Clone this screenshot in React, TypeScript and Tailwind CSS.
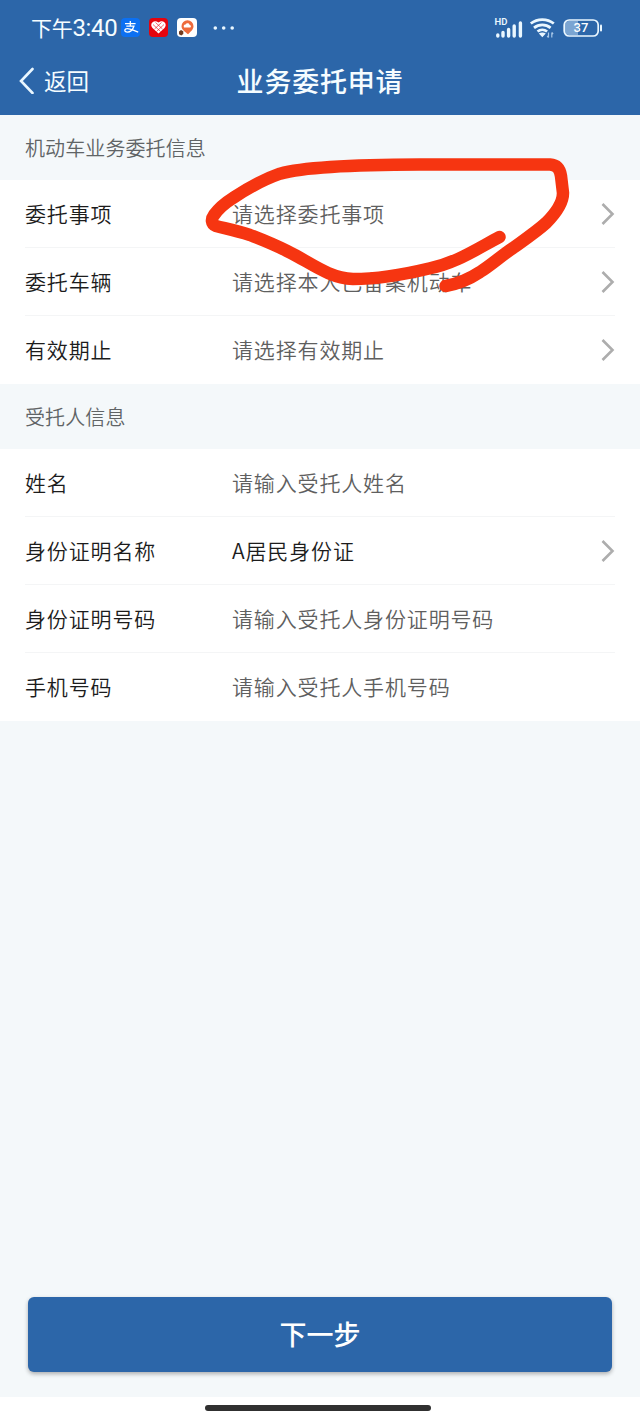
import type { ReactNode } from "react";

type Field = { label: string; value: string; filled?: boolean; arrow?: boolean };

const vehicleFields: Field[] = [
  { label: "委托事项", value: "请选择委托事项", arrow: true },
  { label: "委托车辆", value: "请选择本人已备案机动车", arrow: true },
  { label: "有效期止", value: "请选择有效期止", arrow: true },
];

const trusteeFields: Field[] = [
  { label: "姓名", value: "请输入受托人姓名" },
  { label: "身份证明名称", value: "A居民身份证", filled: true, arrow: true },
  { label: "身份证明号码", value: "请输入受托人身份证明号码" },
  { label: "手机号码", value: "请输入受托人手机号码" },
];

function StatusBar() {
  return (
    <div className="flex h-[55px] items-center pl-[31px] pr-[37px]">
      <div className="flex w-[85px] items-center leading-none whitespace-nowrap">
        <span className="text-[21px] tracking-[-0.300px]">下午</span>
        <span className="text-[24px] font-[450] tracking-[-0.300px] font-['Roboto','Noto_Sans_CJK_SC',sans-serif]">3:40</span>
      </div>
      <svg className="ml-[5px] h-[19px] w-[19px]" viewBox="0 0 19 19" fill="none">
        <rect width="19" height="19" rx="4" fill="#0c70f2" />
        <path
          d="M4 5.600h10.600M9.300 3v5.200M5.300 8.200h7.600c-1 3-3.600 5.900-6.500 5.900-3.700 0-3.200-3.500.2-3.400 3 .1 6 1.900 10.600 3.400"
          stroke="white"
          strokeWidth="1.300"
        />
      </svg>
      <svg className="ml-[9px] h-[19px] w-[19px]" viewBox="0 0 19 19" fill="none">
        <rect width="19" height="19" rx="4" fill="#e5040d" />
        <path
          d="M9.500 15.500 3.500 10C.2 6.700 4.200.8 9.500 4.600c5.300-3.800 9.300 2.100 6 5.400Z"
          fill="white"
        />
        <path
          d="m4 6.500 7.500 7M6.500 4.500l7 6.500M15 6.500l-7.500 7M12.500 4.500l-7 6.500"
          stroke="#e5040d"
          strokeWidth="0.600"
        />
      </svg>
      <svg className="ml-[9px] h-[19px] w-[20px]" viewBox="0 0 20 19" fill="none">
        <rect width="20" height="19" rx="4" fill="white" />
        <path
          d="M10.500 2.300a6 6 0 0 1 6 6c0 3.300-3.300 5.700-5.500 8-2.400-2.300-6.500-4.500-6.500-8a6 6 0 0 1 6-6Z"
          fill="#ee6b3c"
        />
        <path d="M7 9.400c-.9-2 .6-3.400 1.600-2.900.8-2 3.900-1.600 4 .4 1.400.1 1.800 1.700.8 2.500Z" fill="white" />
        <path d="m2 13.500 2-1.500 2.300 1.200v2.700L4.300 17.500 2 16.200Z" fill="#713b20" />
      </svg>
      <svg className="ml-[16px] h-[4px] w-[22px]" viewBox="0 0 22 4" fill="#eaf7ff">
        <circle cx="2.300" cy="2" r="1.800" />
        <circle cx="10.700" cy="2" r="1.800" />
        <circle cx="19.200" cy="2" r="1.800" />
      </svg>
      <div className="ml-auto flex items-center">
        <svg className="h-[24px] w-[30px]" viewBox="0 0 30 24">
          <text x="0.500" y="9" fontSize="9.500" fontWeight="600" fontFamily="Roboto, sans-serif" fill="#eaf7ff">
            HD
          </text>
          <path
            d="M3.800 20v-1M9 20v-3.500M14.600 20v-6.500M20.200 20v-10M26.400 20v-13"
            stroke="#eaf7ff"
            strokeWidth="3.400"
            strokeLinecap="round"
          />
        </svg>
        <svg className="ml-[5px] h-[22px] w-[27px]" viewBox="0 0 27 22" fill="none">
          <path
            d="M1.800 6.500c6.600-5.300 16.400-5.300 23 0M5 10.800c4.800-3.800 11.800-3.800 16.600 0M8.500 14.500c2.800-2.200 6.800-2.200 9.600 0"
            stroke="#eaf7ff"
            strokeWidth="2.800"
          />
          <path d="m9.800 16.600 3.500 3.700 3.500-3.700c-2-1.400-5-1.400-7 0Z" fill="#eaf7ff" />
          <path d="M19.500 15.500v5m-1.300-1.500 1.300 1.500M22.800 20.500v-5m1.300 1.500-1.300-1.500" stroke="#a9c8e8" strokeWidth="1.200" />
        </svg>
        <svg className="ml-[7px] h-[20px] w-[40px]" viewBox="0 0 40 20" fill="none">
          <path d="M5.500 3H15v14H5.500A4 4 0 0 1 2 13V7a4 4 0 0 1 3.500-4Z" fill="#7ba5d2" />
          <rect x="1.200" y="2" width="34" height="16" rx="5" stroke="#eaf7ff" strokeWidth="1.700" />
          <path d="M38 7.500v5" stroke="#eaf7ff" strokeWidth="2" strokeLinecap="round" />
          <text
            x="18"
            y="14.400"
            textAnchor="middle"
            fontSize="13"
            fontWeight="500"
            fontFamily="Roboto, sans-serif"
            fill="white"
          >
            37
          </text>
        </svg>
      </div>
    </div>
  );
}

function NavBar() {
  return (
    <div className="grid h-[50px] grid-cols-[1fr_auto_1fr] items-center">
      <button className="flex items-center pl-[18px] text-[22.500px] leading-none">
        <svg className="mr-[8px] h-[28px] w-[18px]" viewBox="0 0 18 28" fill="none">
          <path d="M14.500 3 3 15l11.500 12" stroke="#eaf7ff" strokeWidth="2.600" strokeLinecap="round" />
        </svg>
        返回
      </button>
      <h1 className="text-[27px] leading-none font-medium tracking-[0.800px]">业务委托申请</h1>
    </div>
  );
}

function SectionTitle({ children }: { children: ReactNode }) {
  return (
    <h2 className="flex h-[65px] items-center pl-[25px] text-[20px] leading-none font-[350] tracking-[0.100px] text-[#606466]">
      {children}
    </h2>
  );
}

function FieldRow({ field }: { field: Field }) {
  return (
    <div className="flex h-[68px] items-center border-b border-[#f4f5f6] text-[21px] leading-none font-[350] tracking-[0.850px] last:border-transparent">
      <span className="w-[207px] text-[#1c1c1c]">{field.label}</span>
      <span className={field.filled ? "grow text-[#1c1c1c]" : "grow text-[#5f5f5f]"}>{field.value}</span>
      {field.arrow && (
        <svg className="h-[24px] w-[14px]" viewBox="0 0 14 24" fill="none">
          <path d="m1.500 2 10 10-10 10" stroke="#adadad" strokeWidth="2.600" />
        </svg>
      )}
    </div>
  );
}

function FieldGroup({ fields }: { fields: Field[] }) {
  return (
    <div className="bg-white px-[25px]">
      {fields.map((field) => (
        <FieldRow key={field.label} field={field} />
      ))}
    </div>
  );
}

function Highlight() {
  return (
    <svg
      className="pointer-events-none absolute top-[150px] left-[200px] h-[150px] w-[380px]"
      viewBox="200 150 380 150"
      fill="none"
    >
      <path
        d="M499.500 237C475 250 456 263 429 268.500C402 275 376 279 353 279C328 278 310 262 287 251C275 245 263 240 250 235C236 230.500 228 229 216 226C211 224 211 219 214 215C219 208 225 203 233 198C245 190 262 180 280 173.700C300 168 350 164.700 420 164.500H550C557 165 560 169 561 176L563 193C563 202 556 213 546 223C536 232 524 240 513 248C501 256 490 266 480 272C468 280 457 284 445.500 286"
        stroke="#f63511"
        strokeWidth="12.500"
        strokeLinecap="round"
        strokeLinejoin="round"
      />
    </svg>
  );
}

export default function App() {
  return (
    <div className="relative flex h-[1422px] w-[640px] flex-col overflow-hidden bg-[#f4f8fa] font-['Noto_Sans_CJK_SC',sans-serif]">
      <header className="h-[115px] bg-[#2c66a9] text-[#f5fcff]">
        <StatusBar />
        <NavBar />
      </header>
      <main className="flex grow flex-col">
        <SectionTitle>机动车业务委托信息</SectionTitle>
        <FieldGroup fields={vehicleFields} />
        <SectionTitle>受托人信息</SectionTitle>
        <FieldGroup fields={trusteeFields} />
        <button className="mx-[28px] mt-auto mb-[25px] h-[75px] rounded-[6px] bg-[#2c66a9] pb-[2px] text-[27px] leading-none font-medium text-white shadow-[0_2px_4px_rgba(0,0,0,0.3)]">
          下一步
        </button>
      </main>
      <footer className="flex h-[25px] justify-center bg-white pt-[8px]">
        <div className="mr-[4px] h-[6px] w-[226px] rounded-full bg-[#303030]" />
      </footer>
      <Highlight />
    </div>
  );
}
